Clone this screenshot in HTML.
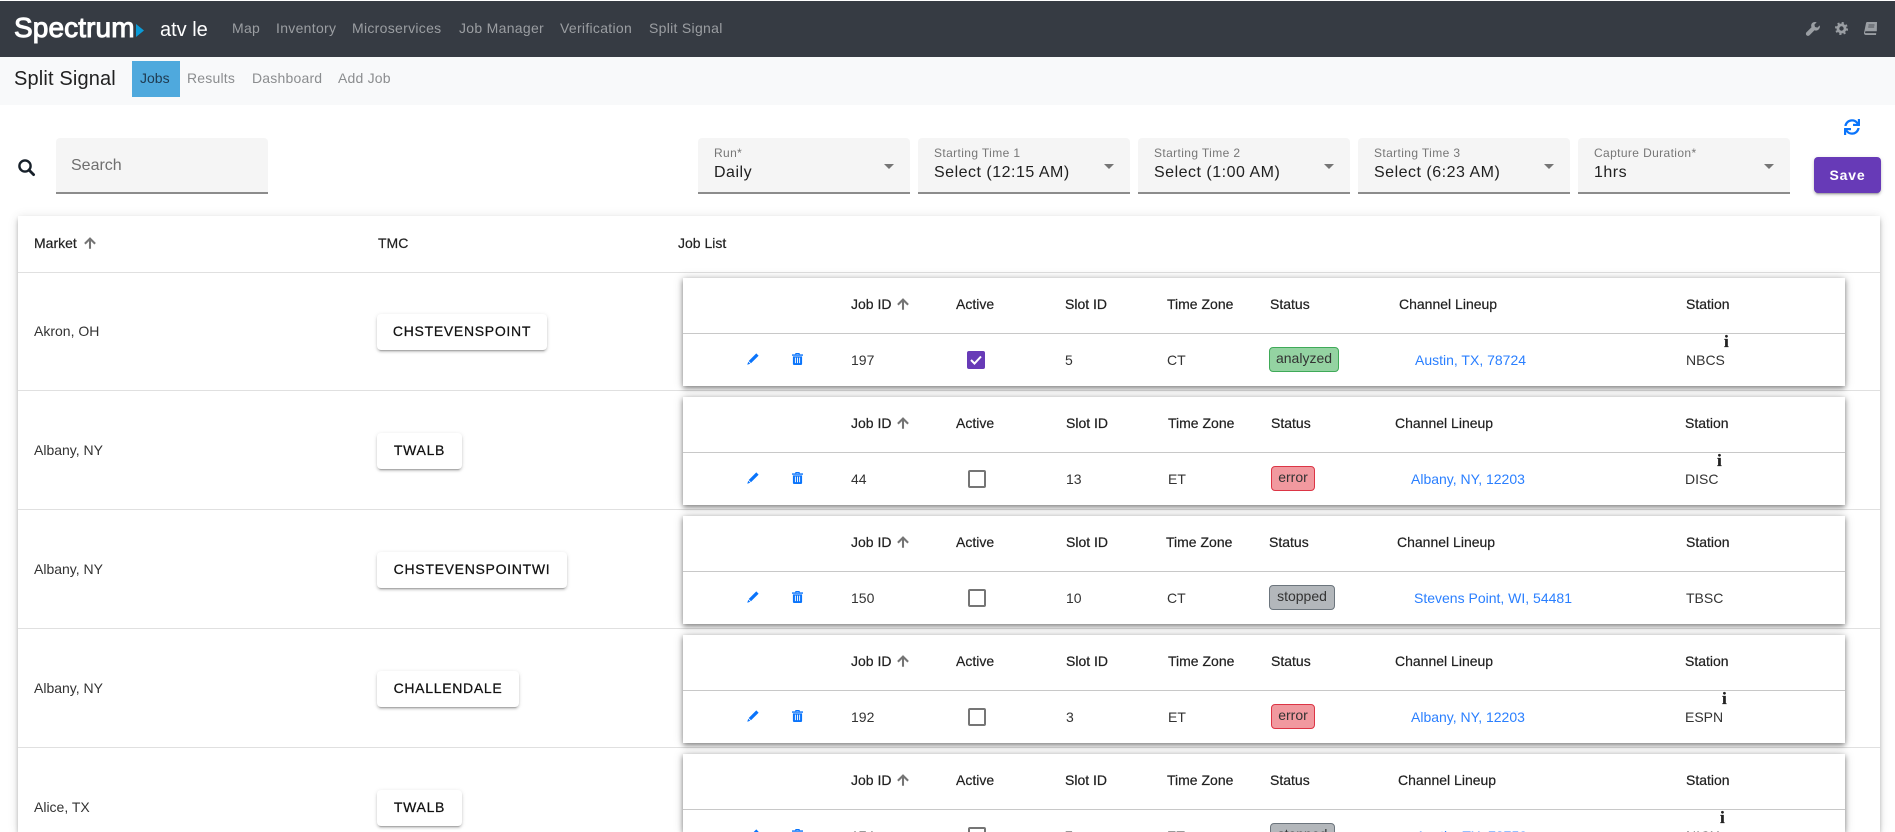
<!DOCTYPE html>
<html lang="en"><head><meta charset="utf-8"><title>Split Signal</title>
<style>
*{box-sizing:border-box}
html,body{margin:0;padding:0;width:1895px;height:832px;overflow:hidden;background:#fff;font-family:"Liberation Sans",sans-serif;font-size:14px;color:#333}
#page{position:relative;width:1895px;height:832px;overflow:hidden;background:#fff}
.a,.t{position:absolute;white-space:nowrap}
.t{line-height:20px;height:20px}
#top{position:absolute;left:0;top:1px;width:1895px;height:56px;background:#363b43}
#sub{position:absolute;left:0;top:57px;width:1895px;height:48px;background:#f8f9fa}
.n{color:#9b9ea2;top:18px;letter-spacing:.3px}
.s{color:#8b8d8f;top:68px;letter-spacing:.2px}
.f{position:absolute;top:138px;height:56px;background:#f5f5f5;border-bottom:2px solid #8c8c8c;border-radius:4px 4px 0 0}
.f .l{position:absolute;left:16px;top:8px;font-size:12px;line-height:14px;color:#767676;letter-spacing:.38px;white-space:nowrap}
.f .v{position:absolute;left:16px;top:25px;font-size:16px;line-height:20px;color:#212121;letter-spacing:.5px;white-space:nowrap}
.f i{position:absolute;right:16px;top:26px;width:0;height:0;border-left:5px solid transparent;border-right:5px solid transparent;border-top:5px solid #757575}
#outer{position:absolute;left:18px;top:216px;width:1862px;height:616px;background:#fff;box-shadow:0 2px 4px -1px rgba(0,0,0,.2),0 4px 5px rgba(0,0,0,.14),0 1px 10px rgba(0,0,0,.12)}
.h{color:#212121;-webkit-text-stroke:.2px #212121}
.row{position:absolute;left:0;width:1895px;height:119px}
.row .sep{position:absolute;left:18px;width:1862px;top:118px;height:1px;background:#e0e0e0}
.btn{position:absolute;left:377px;top:42px;height:36px;background:#fff;border-radius:4px;line-height:34px;text-align:center;color:#111;letter-spacing:.7px;-webkit-text-stroke:.25px #111;box-shadow:0 3px 1px -2px rgba(0,0,0,.2),0 2px 2px 0 rgba(0,0,0,.14),0 1px 5px 0 rgba(0,0,0,.12)}
.card{position:absolute;left:683px;top:6px;width:1162px;height:108px;background:#fff;box-shadow:0 2px 5px rgba(0,0,0,.45),0 0 10px rgba(0,0,0,.16)}
.card .ln{position:absolute;left:0;top:55px;width:1162px;height:1px;background:#c8c8c8}
.hd{top:16px}.cl{top:72px}
.link{color:#2a7fff}
.badge{position:absolute;top:69px;height:25px;border-radius:4px;border:1px solid;line-height:20px;text-align:center;color:#333}
.gr{background:#94d3a2;border-color:#3faa58}
.re{background:#f1999f;border-color:#dc3545}
.st{background:#b3b7bb;border-color:#6c757d}
.cb{position:absolute;top:73px;left:285px;width:18px;height:18px;border-radius:2px;border:2px solid #757575;background:#fff}
.cb.on{background:#673ab7;border:0;left:284px}
.ii{position:absolute;top:56px;font:bold 17px/16px "Liberation Serif",serif;color:#222;-webkit-text-stroke:.3px #222}
svg{position:absolute;display:block;overflow:visible}
</style></head><body>
<div id="page">
<svg width="0" height="0" style="position:absolute"><defs>
<symbol id="pen" viewBox="0 0 12 12"><path fill="#0a74fb" d="M9.3.4 11.6 2.7 4 10.3 1.7 8zM1.2 8.7 3.3 10.8.3 11.700z"/></symbol>
<symbol id="tr" viewBox="0 0 12 13"><path fill="#0a74fb" d="M3.6 1.4V.4a.4.4 0 0 1 .4-.4h4a.4.4 0 0 1 .4.4v1H12V3H0V1.400zM4.700 1.400h2.600V1H4.700zM1 3.600h10v8.400a1 1 0 0 1-1 1H2a1 1 0 0 1-1-1zM3.200 5v6h1V5zM5.500 5v6h1V5zM7.800 5v6h1V5z" fill-rule="evenodd"/></symbol>
<symbol id="up" viewBox="0 0 24 24"><path fill="#757575" stroke="#757575" stroke-width="1.100" d="M4 12l1.410 1.410L11 7.830V20h2V7.830l5.580 5.590L20 12l-8-8-8 8z"/></symbol>
</defs></svg>

<div id="top"></div>
<div class="a" style="left:14px;top:8px;font-size:28px;line-height:40px;color:#fff;-webkit-text-stroke:1px #fff;letter-spacing:.1px">Spectrum</div>
<svg style="left:136px;top:24px" width="8" height="13"><path d="M0 0 8 6.500 0 13z" fill="#0b9bd7"/></svg>
<div class="a" style="left:160px;top:18px;font-size:20px;line-height:24px;color:#fff">atv le</div>
<div class="t n" style="left:232px">Map</div>
<div class="t n" style="left:276px">Inventory</div>
<div class="t n" style="left:352px">Microservices</div>
<div class="t n" style="left:459px">Job Manager</div>
<div class="t n" style="left:560px">Verification</div>
<div class="t n" style="left:649px">Split Signal</div>
<svg style="left:1806px;top:22px" width="14" height="14" viewBox="0 0 14 14"><path fill="#9a9ea3" d="M13.700 3.400 11.400 5.600 9 5 8.400 2.600 10.700.3C8.900-.4 6.800.1 5.800 1.500 5 2.700 5 4.100 5.500 5.300L.5 10.300a2.100 2.100 0 0 0 3 3l5-5c1.300.5 2.800.3 4-.7 1.300-1.100 1.700-2.700 1.200-4.200z"/></svg>
<svg style="left:1835px;top:22px" width="13" height="13" viewBox="0 0 13 13"><circle cx="6.500" cy="6.500" r="3.600" fill="none" stroke="#9a9ea3" stroke-width="2.800"/><circle cx="6.500" cy="6.500" r="5.600" fill="none" stroke="#9a9ea3" stroke-width="1.800" stroke-dasharray="2.200 2.200"/></svg>
<svg style="left:1864px;top:22px" width="13" height="13" viewBox="0 0 13 13"><path fill="#9a9ea3" d="M3.200 0H13l-.2 9.300-10.600 0c-.9 0-1.200.4-1.200.9 0 .5.4.9 1.200.9h10l-.2 1.900H2C.8 13 0 12.200 0 11c0-.4.100-.7.200-1L2 1.300C2.100.500 2.500 0 3.200 0z"/><path d="M4.500 3h6M4.200 5h6" stroke="#363b43" stroke-width=".8"/></svg>

<div id="sub"></div>
<div class="a" style="left:14px;top:67px;font-size:20px;line-height:24px;color:#212121;letter-spacing:.15px">Split Signal</div>
<div class="a" style="left:132px;top:61px;width:48px;height:36px;background:#4fa9dd"></div>
<div class="t" style="left:140px;top:68px;color:#1f3a50">Jobs</div>
<div class="t s" style="left:187px">Results</div>
<div class="t s" style="left:252px">Dashboard</div>
<div class="t s" style="left:338px">Add Job</div>

<svg style="left:18px;top:159px" width="17" height="17" viewBox="0 0 17 17"><circle cx="7" cy="7" r="5.600" fill="none" stroke="#17202a" stroke-width="2.400"/><path d="M11 11l4.600 4.600" stroke="#17202a" stroke-width="2.800" stroke-linecap="round"/></svg>
<div class="f" style="left:56px;width:212px"><div class="a" style="left:15px;top:18px;font-size:16px;line-height:20px;color:#6f6f6f">Search</div></div>
<div class="f" style="left:698px;width:212px"><div class="l">Run*</div><div class="v">Daily</div><i></i></div>
<div class="f" style="left:918px;width:212px"><div class="l">Starting Time 1</div><div class="v">Select (12:15 AM)</div><i></i></div>
<div class="f" style="left:1138px;width:212px"><div class="l">Starting Time 2</div><div class="v">Select (1:00 AM)</div><i></i></div>
<div class="f" style="left:1358px;width:212px"><div class="l">Starting Time 3</div><div class="v">Select (6:23 AM)</div><i></i></div>
<div class="f" style="left:1578px;width:212px"><div class="l">Capture Duration*</div><div class="v">1hrs</div><i></i></div>
<svg style="left:1844px;top:119px" width="16" height="16" viewBox="0 0 512 512"><path fill="#0a74fb" d="M440.650 12.570l4 82.770A247.160 247.160 0 0 0 255.830 8C134.730 8 33.910 94.920 12.290 209.820A12 12 0 0 0 24.090 224h49.050a12 12 0 0 0 11.670-9.260 175.910 175.910 0 0 1 317-56.940l-101.460-4.860a12 12 0 0 0-12.570 12v47.410a12 12 0 0 0 12 12H500a12 12 0 0 0 12-12V12a12 12 0 0 0-12-12h-47.370a12 12 0 0 0-11.980 12.570zM255.830 432a175.610 175.610 0 0 1-146-77.800l101.800 4.870a12 12 0 0 0 12.570-12v-47.400a12 12 0 0 0-12-12H12a12 12 0 0 0-12 12V500a12 12 0 0 0 12 12h47.350a12 12 0 0 0 12-12.600l-4.150-82.570A247.170 247.170 0 0 0 255.830 504c121.110 0 221.930-86.920 243.550-201.820a12 12 0 0 0-11.800-14.180h-49.050a12 12 0 0 0-11.670 9.260A175.860 175.860 0 0 1 255.830 432z"/></svg>
<div class="a" style="left:1814px;top:157px;width:67px;height:36px;background:#673ab7;border-radius:4px;color:#fff;font-weight:bold;line-height:36px;text-align:center;letter-spacing:.8px;box-shadow:0 3px 1px -2px rgba(0,0,0,.2),0 2px 2px 0 rgba(0,0,0,.14),0 1px 5px 0 rgba(0,0,0,.12)">Save</div>

<div id="outer"></div>
<div class="t h" style="left:34px;top:233px">Market</div>
<svg style="left:82px;top:235px" width="16" height="16"><use href="#up"/></svg>
<div class="t h" style="left:378px;top:233px">TMC</div>
<div class="t h" style="left:678px;top:233px">Job List</div>
<div class="a" style="left:18px;top:272px;width:1862px;height:1px;background:#e0e0e0"></div>

<!-- Row 1 -->
<div class="row" style="top:272px"><div class="sep"></div>
<div class="t" style="left:34px;top:49px">Akron, OH</div>
<div class="btn" style="width:170px">CHSTEVENSPOINT</div>
<div class="card"><div class="ln"></div>
<div class="t h hd" style="left:168px">Job ID</div><svg style="left:212px;top:18px" width="16" height="16"><use href="#up"/></svg>
<div class="t h hd" style="left:273px">Active</div><div class="t h hd" style="left:382px">Slot ID</div><div class="t h hd" style="left:484px">Time Zone</div><div class="t h hd" style="left:587px">Status</div><div class="t h hd" style="left:716px">Channel Lineup</div><div class="t h hd" style="left:1003px">Station</div>
<svg style="left:64px;top:75px" width="12" height="12"><use href="#pen"/></svg><svg style="left:109px;top:75px" width="11" height="12"><use href="#tr"/></svg>
<div class="t cl" style="left:168px">197</div>
<div class="cb on"><svg style="left:3px;top:4px" width="12" height="10" viewBox="0 0 12 10"><path d="M1 5l3.500 3.500L11 1.500" fill="none" stroke="#fff" stroke-width="2"/></svg></div>
<div class="t cl" style="left:382px">5</div><div class="t cl" style="left:484px">CT</div>
<div class="badge gr" style="left:586px;width:70px">analyzed</div>
<div class="t cl link" style="left:732px">Austin, TX, 78724</div>
<div class="t cl" style="left:1003px">NBCS</div><div class="ii" style="left:1041px">i</div>
</div></div>

<!-- Row 2 -->
<div class="row" style="top:391px"><div class="sep"></div>
<div class="t" style="left:34px;top:49px">Albany, NY</div>
<div class="btn" style="width:85px">TWALB</div>
<div class="card"><div class="ln"></div>
<div class="t h hd" style="left:168px">Job ID</div><svg style="left:212px;top:18px" width="16" height="16"><use href="#up"/></svg>
<div class="t h hd" style="left:273px">Active</div><div class="t h hd" style="left:383px">Slot ID</div><div class="t h hd" style="left:485px">Time Zone</div><div class="t h hd" style="left:588px">Status</div><div class="t h hd" style="left:712px">Channel Lineup</div><div class="t h hd" style="left:1002px">Station</div>
<svg style="left:64px;top:75px" width="12" height="12"><use href="#pen"/></svg><svg style="left:109px;top:75px" width="11" height="12"><use href="#tr"/></svg>
<div class="t cl" style="left:168px">44</div>
<div class="cb"></div>
<div class="t cl" style="left:383px">13</div><div class="t cl" style="left:485px">ET</div>
<div class="badge re" style="left:588px;width:44px">error</div>
<div class="t cl link" style="left:728px">Albany, NY, 12203</div>
<div class="t cl" style="left:1002px">DISC</div><div class="ii" style="left:1034px">i</div>
</div></div>

<!-- Row 3 -->
<div class="row" style="top:510px"><div class="sep"></div>
<div class="t" style="left:34px;top:49px">Albany, NY</div>
<div class="btn" style="width:190px">CHSTEVENSPOINTWI</div>
<div class="card"><div class="ln"></div>
<div class="t h hd" style="left:168px">Job ID</div><svg style="left:212px;top:18px" width="16" height="16"><use href="#up"/></svg>
<div class="t h hd" style="left:273px">Active</div><div class="t h hd" style="left:383px">Slot ID</div><div class="t h hd" style="left:483px">Time Zone</div><div class="t h hd" style="left:586px">Status</div><div class="t h hd" style="left:714px">Channel Lineup</div><div class="t h hd" style="left:1003px">Station</div>
<svg style="left:64px;top:75px" width="12" height="12"><use href="#pen"/></svg><svg style="left:109px;top:75px" width="11" height="12"><use href="#tr"/></svg>
<div class="t cl" style="left:168px">150</div>
<div class="cb"></div>
<div class="t cl" style="left:383px">10</div><div class="t cl" style="left:484px">CT</div>
<div class="badge st" style="left:586px;width:66px">stopped</div>
<div class="t cl link" style="left:731px">Stevens Point, WI, 54481</div>
<div class="t cl" style="left:1003px">TBSC</div>
</div></div>

<!-- Row 4 -->
<div class="row" style="top:629px"><div class="sep"></div>
<div class="t" style="left:34px;top:49px">Albany, NY</div>
<div class="btn" style="width:142px">CHALLENDALE</div>
<div class="card"><div class="ln"></div>
<div class="t h hd" style="left:168px">Job ID</div><svg style="left:212px;top:18px" width="16" height="16"><use href="#up"/></svg>
<div class="t h hd" style="left:273px">Active</div><div class="t h hd" style="left:383px">Slot ID</div><div class="t h hd" style="left:485px">Time Zone</div><div class="t h hd" style="left:588px">Status</div><div class="t h hd" style="left:712px">Channel Lineup</div><div class="t h hd" style="left:1002px">Station</div>
<svg style="left:64px;top:75px" width="12" height="12"><use href="#pen"/></svg><svg style="left:109px;top:75px" width="11" height="12"><use href="#tr"/></svg>
<div class="t cl" style="left:168px">192</div>
<div class="cb"></div>
<div class="t cl" style="left:383px">3</div><div class="t cl" style="left:485px">ET</div>
<div class="badge re" style="left:588px;width:44px">error</div>
<div class="t cl link" style="left:728px">Albany, NY, 12203</div>
<div class="t cl" style="left:1002px">ESPN</div><div class="ii" style="left:1039px">i</div>
</div></div>

<!-- Row 5 -->
<div class="row" style="top:748px;height:84px">
<div class="t" style="left:34px;top:49px">Alice, TX</div>
<div class="btn" style="width:85px">TWALB</div>
<div class="card" style="height:78px;overflow:hidden"><div class="ln"></div>
<div class="t h hd" style="left:168px">Job ID</div><svg style="left:212px;top:18px" width="16" height="16"><use href="#up"/></svg>
<div class="t h hd" style="left:273px">Active</div><div class="t h hd" style="left:382px">Slot ID</div><div class="t h hd" style="left:484px">Time Zone</div><div class="t h hd" style="left:587px">Status</div><div class="t h hd" style="left:715px">Channel Lineup</div><div class="t h hd" style="left:1003px">Station</div>
<svg style="left:64px;top:75px" width="12" height="12"><use href="#pen"/></svg><svg style="left:109px;top:75px" width="11" height="12"><use href="#tr"/></svg>
<div class="t cl" style="left:168px">174</div>
<div class="cb"></div>
<div class="t cl" style="left:382px">7</div><div class="t cl" style="left:484px">ET</div>
<div class="badge st" style="left:587px;width:65px">stopped</div>
<div class="t cl link" style="left:733px">Austin, TX, 78750</div>
<div class="t cl" style="left:1003px">NICX</div><div class="ii" style="left:1037px">i</div>
</div></div>
</div>
</body></html>
